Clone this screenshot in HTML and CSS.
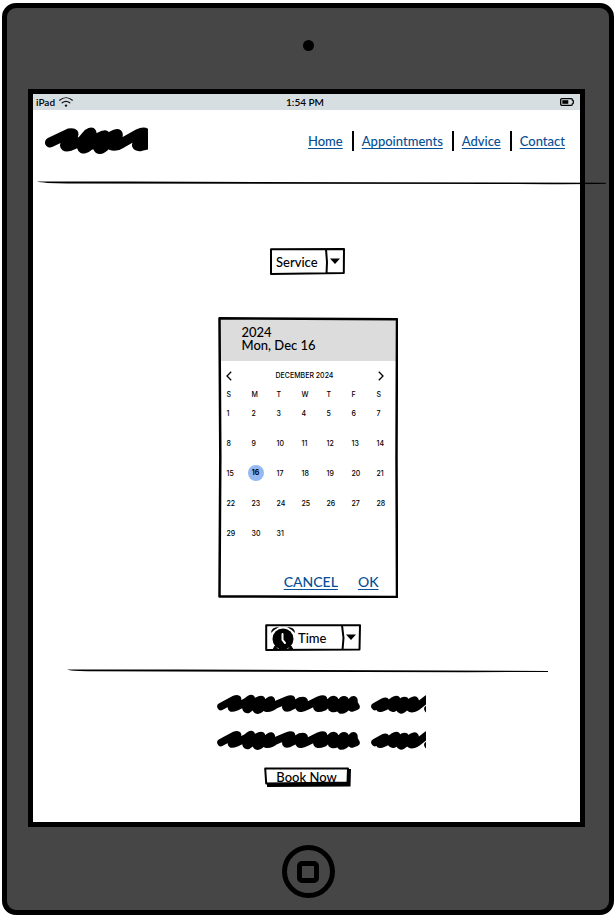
FILE: index.html
```html
<!DOCTYPE html>
<html lang="en">
<head>
<meta charset="utf-8">
<meta name="viewport" content="width=device-width, initial-scale=1">
<title>Book an appointment</title>
<link rel="stylesheet" href="styles.css">
</head>
<body>
<div class="device">
  <div class="camera"></div>
  <div class="screen">
    <div class="status">
      <div class="status-left">
        <span>iPad</span>
        <svg class="wifi" viewBox="0 0 14 10" aria-hidden="true">
          <path d="M.6 3.2C4.5-.1 9.5-.1 13.4 3.2M3.2 5.8c2.4-1.9 5.2-1.9 7.6 0" fill="none" stroke="#111" stroke-width="1.2" stroke-linecap="round"/>
          <circle cx="7" cy="8.6" r="1.2" fill="#111"/>
        </svg>
      </div>
      <span>1:54 PM</span>
      <div class="status-right">
        <svg class="battery" viewBox="0 0 14 8" aria-hidden="true">
          <path d="M2 .7h9.2q1.2 0 1.2 1.2v.3q.9 0 .9.8v2q0 .8-.9.8v.3q0 1.2-1.2 1.2H2Q.7 7.300.7 6V2Q.7.7 2 .7z" fill="none" stroke="#000" stroke-width="1.3"/>
          <path d="M2.300 2.200h6v3.600h-6z"/>
        </svg>
      </div>
    </div>

    <header class="header">
      <svg class="logo" viewBox="0 0 103 28" role="img" aria-label="Logo">
        <path d="M5 15.500L24 6.500Q31 5 27 10L21 16Q18 21 25 19L37 14 43 7Q49 3 45 10L37 20Q38 24 45 18L55 10Q63 5 59 13L53 20Q54 25 61 18L67 9Q75 4 72 11L66 18Q71 20 77 16L93 7Q100 4 102 8L94 14Q89 20 96 19L108 16M41 14L50 18 56 14 63 17 70 13" fill="none" stroke="#000" stroke-width="10" stroke-linecap="round" stroke-linejoin="round"/>
      </svg>
      <nav>
        <ul class="nav">
          <li><a href="#home">Home</a></li>
          <li><a href="#appointments">Appointments</a></li>
          <li><a href="#advice">Advice</a></li>
          <li><a href="#contact">Contact</a></li>
        </ul>
      </nav>
      <svg class="rule" viewBox="0 0 569 4" preserveAspectRatio="none" aria-hidden="true">
        <path d="M0 .6Q30 .3 90 .6L569 1.700V2.800Q540 3.400 480 3L30 2.500Q6 2.400 0 .6z"/>
      </svg>
    </header>

    <main class="main">
      <div class="picker">
        <svg class="sketch" viewBox="0 0 75 27" preserveAspectRatio="none" aria-hidden="true">
          <path d="M1 1.200L74 1 73.800 25 1 26zM56 1.200L57 14 56.500 26" fill="none" stroke="#000" stroke-width="2" stroke-linejoin="round"/>
          <path d="M60 10.500h10L65 16z"/>
        </svg>
        <select class="select" aria-label="Service"><option>Service</option></select>
      </div>

      <section class="calendar" aria-label="Choose a date">
        <svg class="sketch" viewBox="0 0 180 281" preserveAspectRatio="none" aria-hidden="true">
          <path d="M1.500 1.300L179 2.200 178.500 140 179 280 1.500 279.500 2.300 140z" fill="none" stroke="#000" stroke-width="2.500" stroke-linejoin="round"/>
        </svg>
        <div class="cal-head"><div>2024</div><div>Mon, Dec 16</div></div>
        <div class="cal-month">
          <button class="arrow" type="button" aria-label="Previous month"><svg viewBox="0 0 6 10"><path d="M5.200.8L1 5l4.200 4.200"/></svg></button>
          <span>DECEMBER 2024</span>
          <button class="arrow" type="button" aria-label="Next month"><svg viewBox="0 0 6 10"><path d="M.8.8L5 5 .8 9.200"/></svg></button>
        </div>
        <table class="days">
          <thead><tr><th>S</th><th>M</th><th>T</th><th>W</th><th>T</th><th>F</th><th>S</th></tr></thead>
          <tbody>
            <tr><td>1</td><td>2</td><td>3</td><td>4</td><td>5</td><td>6</td><td>7</td></tr>
            <tr><td>8</td><td>9</td><td>10</td><td>11</td><td>12</td><td>13</td><td>14</td></tr>
            <tr><td>15</td><td><span class="today">16</span></td><td>17</td><td>18</td><td>19</td><td>20</td><td>21</td></tr>
            <tr><td>22</td><td>23</td><td>24</td><td>25</td><td>26</td><td>27</td><td>28</td></tr>
            <tr><td>29</td><td>30</td><td>31</td><td></td><td></td><td></td><td></td></tr>
          </tbody>
        </table>
        <div class="cal-actions"><a href="#cancel">CANCEL</a><a href="#ok">OK</a></div>
      </section>

      <div class="picker picker-time">
        <svg class="sketch" viewBox="0 0 96 27" preserveAspectRatio="none" aria-hidden="true">
          <path d="M1.200 1.300L95 1.200 94.500 25.500 1.200 26zM77 1.200L78.500 14 77.500 26" fill="none" stroke="#000" stroke-width="2" stroke-linejoin="round"/>
          <path d="M81 10.500h10L86 16z"/>
        </svg>
        <svg class="clock" viewBox="0 0 24 24" aria-hidden="true">
          <path d="M0 7Q0 1 8 1 4 3 0 7zM24 7Q24 1 16 1q4 2 8 6z"/>
          <circle cx="12" cy="13" r="10.500"/>
          <path d="M4 20l-2 3.500h5zM20 20l2 3.500h-5z" stroke="#000"/>
          <path d="M11.500 8v6l2.500 3" fill="none" stroke="#fff" stroke-width="2" stroke-linecap="round"/>
        </svg>
        <select class="select" aria-label="Time"><option>Time</option></select>
      </div>

      <svg class="divider" viewBox="0 0 481 4" preserveAspectRatio="none" aria-hidden="true">
        <path d="M0 .4L110 .5 481 2V3L400 3.200 20 2.200Q4 1.800 0 .4z"/>
      </svg>

      <div class="summary">
        <svg class="scribble" viewBox="0 0 209 20" role="img" aria-label="Service summary">
          <path id="words" d="M4 12.500L17 5.500Q23 3 19 8L16 11Q12 16 19 13L29 8Q37 1 33 8L29 14Q30 18 35 11L40 7Q47 3 43 9L39 15Q41 18 46 12L52 7Q56 4 53 10L49 14Q53 15 58 11L70 6Q77 3 73 8L69 12Q68 16 75 12L83 7Q90 5 85 10L82 13Q82 16 90 12L102 6Q109 3 105 8L100 12Q99 16 107 13L115 6Q120 4 116 12L115 14Q119 16 122 10L126 6Q130 5 127 11L124 16Q128 16 131 11L136 6Q138 5 136 12L135 14 139 12.500M158 12.500L166 8Q171 6 167 10L163 13Q161 16 169 12L176 7Q182 3 178 9L174 13Q176 16 181 11L186 7Q190 5 187 11L183 15Q184 18 190 11L195 7Q200 4 197 10L193 14Q195 16 201 12L210 5M211 15L213 14M31 12L50 11M117 11L138 11M174 11L195 11" fill="none" stroke="#000" stroke-width="7.600" stroke-linecap="round" stroke-linejoin="round"/>
        </svg>
        <svg class="scribble" viewBox="0 0 209 20" role="img" aria-label="Time summary"><use href="#words"/></svg>
      </div>

      <button class="book" type="button">
        <svg class="sketch" viewBox="0 0 87 20" preserveAspectRatio="none" aria-hidden="true">
          <path d="M3 2L87 2 86.500 19.500 3 20z"/>
          <path d="M1.200 1.500L84 1.500 83.500 15.500 2.200 16.500z" fill="#fff" stroke="#000" stroke-width="2" stroke-linejoin="round"/>
        </svg>
        <span>Book Now</span>
      </button>
    </main>
  </div>
  <button class="home" type="button" aria-label="Home button"><span></span></button>
</div>
</body>
</html>
```
FILE: styles.css
```css
* { box-sizing: border-box; }

body {
  margin: 0;
  padding: 3px 2px 2px;
  background: #fff;
  color: #000;
  font: 500 13px/16px Lato, "Liberation Sans", sans-serif;
}

a { color: #054f96; text-underline-offset: 2px; }
button { padding: 0; border: 0; background: none; color: inherit; font: inherit; }

.device {
  display: flex;
  flex-direction: column;
  border: 5px solid #000;
  border-radius: 14px;
  background: #464646;
}
.camera {
  width: 11px;
  height: 11px;
  margin: 32px auto 38px;
  border-radius: 50%;
  background: #000;
}
.screen {
  margin: 0 24px 0 21px;
  border: 5px solid #000;
  background: #fff;
}

.status {
  display: grid;
  grid-template-columns: 1fr auto 1fr;
  align-items: center;
  height: 16px;
  padding: 0 6px 0 3px;
  background: #d7dee2;
  font-size: 10px;
  font-weight: 600;
}
.status-left { display: flex; align-items: center; gap: 4px; }
.status-right { display: flex; justify-content: flex-end; }
.wifi { width: 14px; height: 10px; }
.battery { width: 14px; height: 8px; }

.header {
  position: relative;
  display: flex;
  justify-content: space-between;
  align-items: center;
  padding: 17px 15px 28px 12px;
}
.logo { width: 103px; height: 28px; }
.nav { display: flex; margin: 0; padding: 0; list-style: none; }
.nav li { padding: 2px 0; }
.nav li + li { margin-left: 9px; padding-left: 8px; border-left: 2px solid #000; }
.rule {
  position: absolute;
  left: 4px;
  bottom: -2px;
  width: calc(100% + 22px);
  height: 4px;
}

.main {
  display: flex;
  flex-direction: column;
  align-items: center;
  padding: 65px 32px 35px 34px;
}

.sketch { position: absolute; inset: 0; width: 100%; height: 100%; pointer-events: none; }

.picker {
  position: relative;
  display: flex;
  align-items: center;
  width: 75px;
  height: 27px;
}
.picker-time { width: 96px; margin: 26px 0 0 11px; padding-left: 6px; gap: 3px; }
.clock { position: relative; flex: none; width: 24px; height: 24px; }
.select {
  position: relative;
  flex: 1;
  min-width: 0;
  height: 27px;
  padding: 0;
  border: 0;
  background: none;
  color: inherit;
  font: inherit;
  appearance: none;
}
.picker:not(.picker-time) .select { padding-left: 6px; }

.calendar {
  position: relative;
  width: 180px;
  margin-top: 42px;
  padding: 2px 2px 8px;
}
.cal-head { height: 42px; padding: 7px 22px; background: #dcdcdc; line-height: 13px; }
.cal-month {
  display: flex;
  align-items: center;
  justify-content: space-between;
  height: 30px;
  padding: 0 12px 0 6px;
  font: 500 7px/8px Inter, "Liberation Sans", sans-serif;
}
.arrow { display: flex; }
.arrow svg { width: 6px; height: 10px; fill: none; stroke: #000; stroke-width: 1.3; }
.days {
  width: 100%;
  padding-left: 7px;
  border-spacing: 0;
  table-layout: fixed;
  font: 500 7px/7px Inter, "Liberation Sans", sans-serif;
}
.days th, .days td { padding: 0; text-align: left; font-weight: 500; }
.days th { width: 25px; height: 7px; }
.days th:last-child { width: auto; }
.days td { height: 30px; }
.today {
  display: block;
  width: 16px;
  margin-left: -4px;
  border-radius: 50%;
  background: #94b9f2;
  font-weight: 700;
  line-height: 16px;
  text-align: center;
}
.cal-actions {
  display: flex;
  justify-content: flex-end;
  gap: 20px;
  padding: 26px 17px 0;
  font-size: 14px;
}

.divider { width: 100%; height: 4px; margin-top: 18px; }
.summary { display: flex; flex-direction: column; gap: 16px; margin: 21px 0 0 28px; }
.scribble { width: 209px; height: 20px; }

.book { position: relative; width: 87px; height: 20px; margin-top: 17px; }
.book span { position: relative; display: block; padding-right: 2px; }

.home {
  display: grid;
  place-items: center;
  width: 53px;
  height: 53px;
  margin: 18px auto 12px;
  border: 5px solid #000;
  border-radius: 50%;
}
.home span { width: 22px; height: 22px; border: 5px solid #000; border-radius: 5px; }
```
